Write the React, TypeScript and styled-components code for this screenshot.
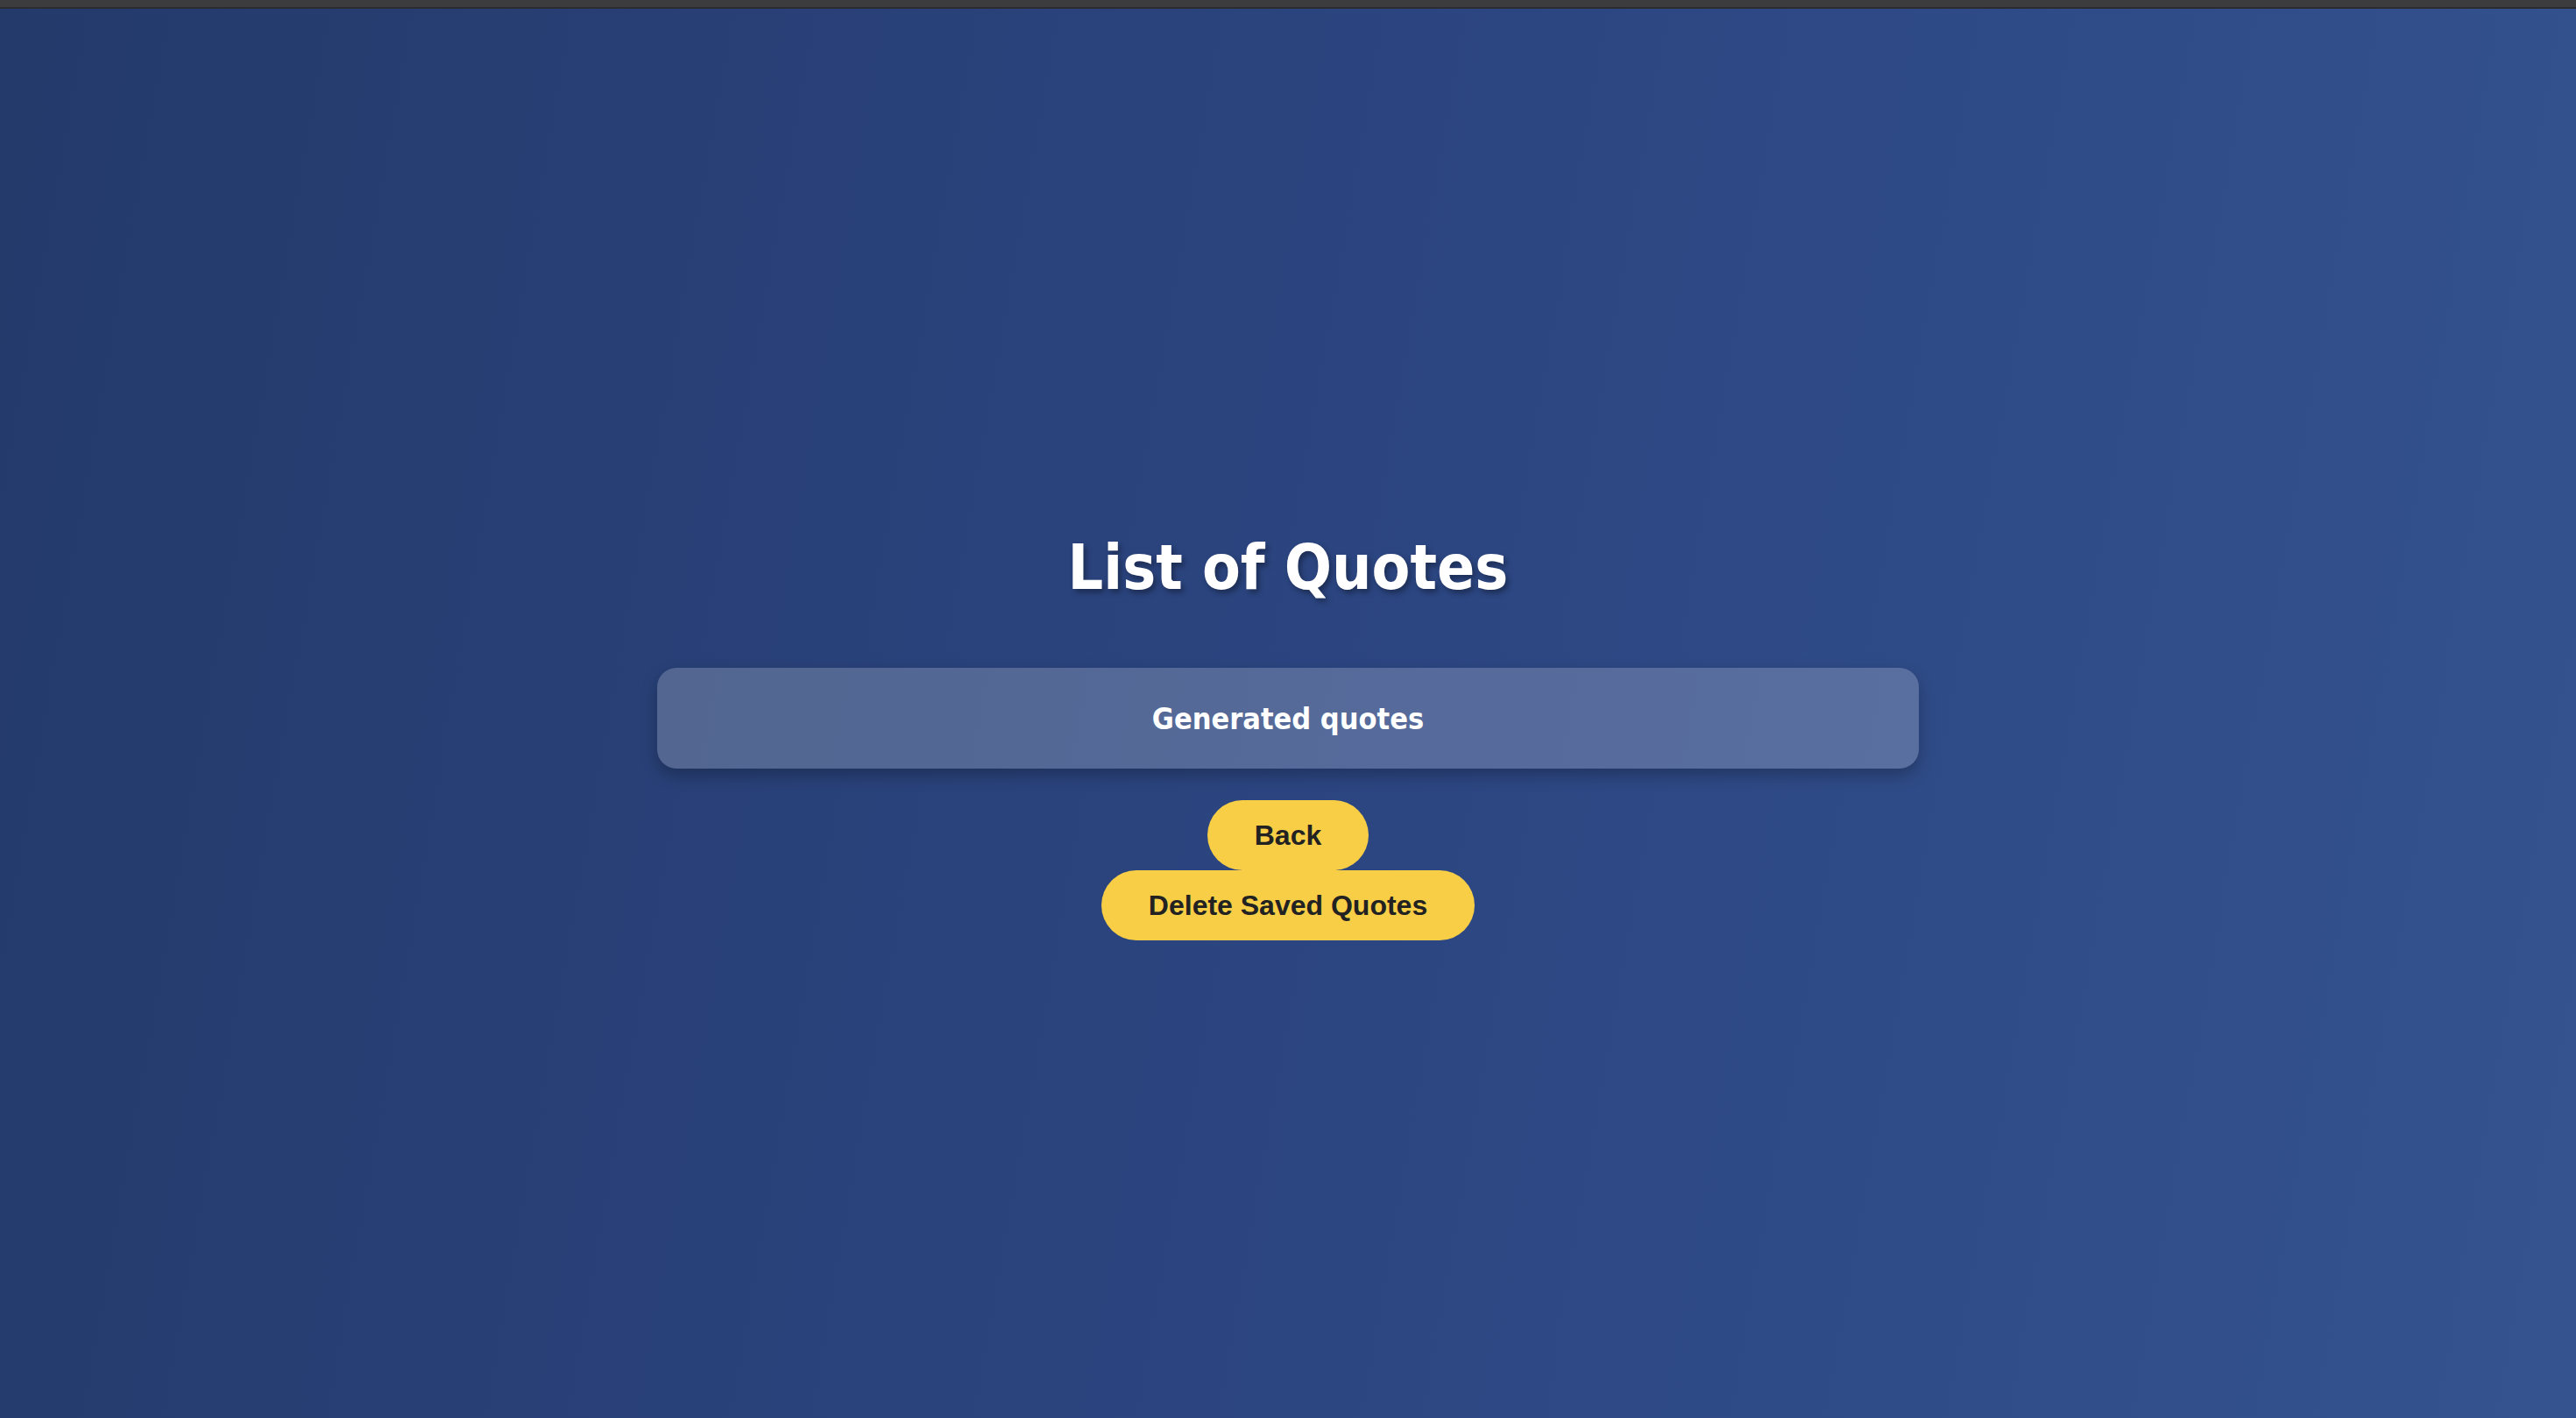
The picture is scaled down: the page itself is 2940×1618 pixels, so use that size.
import styled, { createGlobalStyle } from "styled-components";

const GlobalStyle = createGlobalStyle`
  html, body {
    margin: 0;
    padding: 0;
    height: 100%;
  }
  body {
    font-family: "Liberation Sans", Arial, sans-serif;
  }
`;

const Page = styled.div`
  display: flex;
  flex-direction: column;
  min-height: 100vh;
`;

const TopStrip = styled.div`
  height: 8px;
  background-color: #3c3b3e;
  border-bottom: 2px solid #2c2c30;
`;

const Main = styled.main`
  flex: 1;
  display: flex;
  flex-direction: column;
  align-items: center;
  padding-top: 590px;
  background: linear-gradient(100deg, #243a6b 0%, #2c4682 55%, #34538f 100%);
`;

const Title = styled.h1`
  margin: 0;
  font-family: "DejaVu Sans Condensed", "DejaVu Sans", sans-serif;
  font-stretch: condensed;
  font-size: 71px;
  line-height: 96px;
  font-weight: bold;
  color: #ffffff;
  text-shadow: 3px 4px 6px rgba(0, 0, 0, 0.35);
`;

const Card = styled.section`
  margin-top: 66px;
  width: 1440px;
  height: 115px;
  display: flex;
  align-items: center;
  justify-content: center;
  border-radius: 22px;
  background-color: rgba(255, 255, 255, 0.2);
  box-shadow: 0 8px 18px rgba(0, 0, 0, 0.25);
`;

const CardLabel = styled.h3`
  margin: 0;
  font-family: "DejaVu Sans Condensed", "DejaVu Sans", sans-serif;
  font-stretch: condensed;
  font-size: 34px;
  font-weight: bold;
  color: #ffffff;
`;

const Actions = styled.div`
  margin-top: 36px;
  display: flex;
  flex-direction: column;
  align-items: center;
`;

const Button = styled.button`
  height: 80px;
  padding: 0 54px;
  border: none;
  border-radius: 40px;
  background-color: #f7ce46;
  color: #222222;
  font-family: "Liberation Sans", Arial, sans-serif;
  font-size: 32px;
  font-weight: bold;
  cursor: pointer;
`;

export default function App() {
  return (
    <Page>
      <GlobalStyle />
      <TopStrip />
      <Main>
        <Title>List of Quotes</Title>
        <Card>
          <CardLabel>Generated quotes</CardLabel>
        </Card>
        <Actions>
          <Button>Back</Button>
          <Button>Delete Saved Quotes</Button>
        </Actions>
      </Main>
    </Page>
  );
}
